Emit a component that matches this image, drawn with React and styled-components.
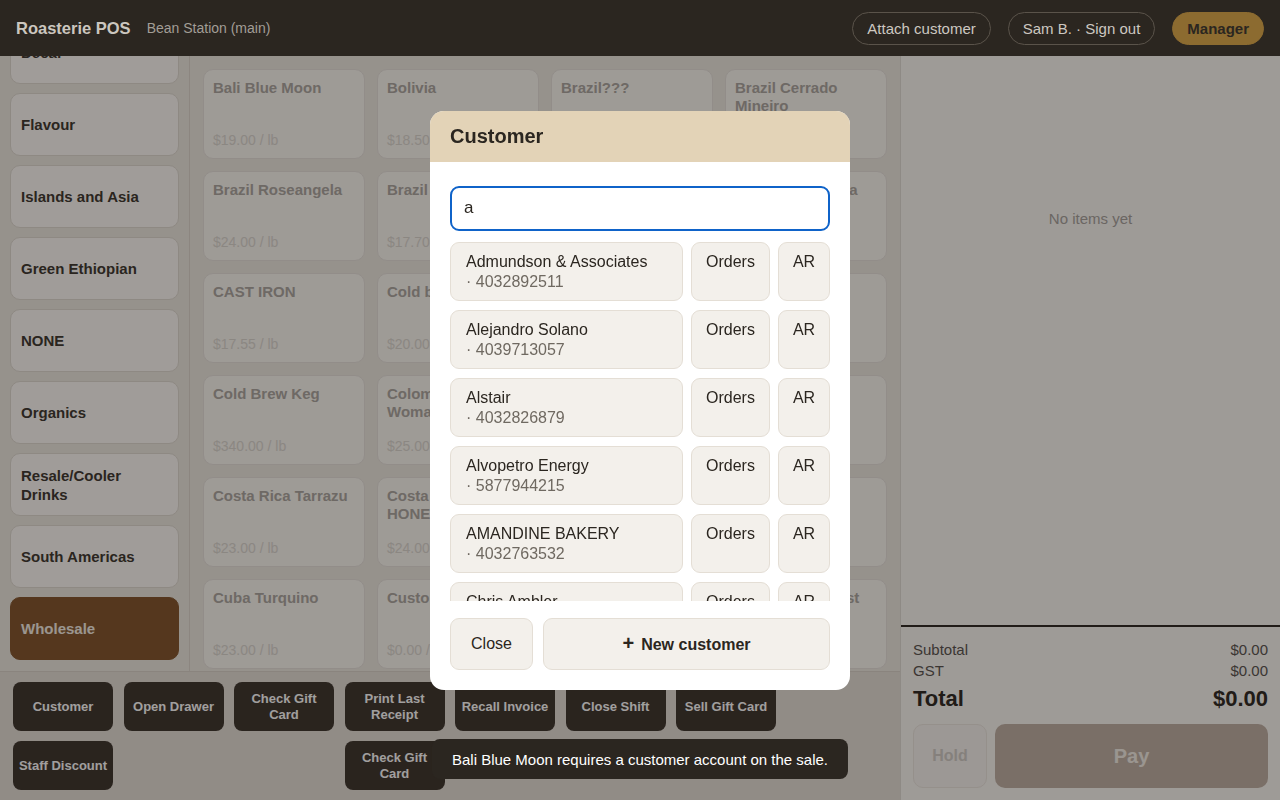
import React, { useLayoutEffect, useRef } from 'react'
import styled, { createGlobalStyle } from 'styled-components'

const GlobalStyle = createGlobalStyle`
  * { box-sizing: border-box; }
  html, body { margin: 0; padding: 0; height: 100%; }
  body {
    font-family: "Liberation Sans", Arial, sans-serif;
    color: #2b2620;
    background: #ede9e1;
    overflow: hidden;
  }
  button { font-family: inherit; cursor: pointer; }
`;

const Shell = styled.div`
  display: grid;
  grid-template-rows: 56px 1fr;
  width: 1280px;
  height: 800px;
`;

const TopBar = styled.header`
  position: relative;
  z-index: 60;
  display: flex;
  align-items: center;
  padding: 0 16px;
  background: #2b2620;
`;

const Brand = styled.div`
  font-size: 16.5px;
  font-weight: bold;
  color: #cbc6bf;
`;

const Store = styled.div`
  margin-left: 16px;
  font-size: 14px;
  color: #a29d96;
`;

const TopActions = styled.div`
  margin-left: auto;
  display: flex;
  gap: 17px;
`;

const Pill = styled.button`
  height: 33px;
  padding: 0 14px;
  border-radius: 999px;
  font-size: 15px;
  border: 1px solid ${p => (p.$gold ? '#8c6b30' : '#5a534a')};
  background: ${p => (p.$gold ? '#8c6b30' : 'transparent')};
  color: ${p => (p.$gold ? '#2b2620' : '#cdc8c1')};
  font-weight: ${p => (p.$gold ? 'bold' : 'normal')};
`;

const Body = styled.div`
  display: grid;
  grid-template-columns: 900px 1fr;
  min-height: 0;
`;

const LeftColumn = styled.div`
  display: grid;
  grid-template-rows: 1fr 129px;
  min-height: 0;
`;

const Catalog = styled.div`
  display: grid;
  grid-template-columns: 190px 1fr;
  min-height: 0;
`;

const Sidebar = styled.nav`
  display: flex;
  flex-direction: column;
  gap: 9px;
  padding: 10px 10px 11px;
  border-right: 1px solid #dcd6cd;
  overflow-y: auto;
  scrollbar-width: none;
  &::-webkit-scrollbar { display: none; }
`;

const CategoryButton = styled.button`
  flex: 0 0 63px;
  display: flex;
  align-items: center;
  padding: 0 10px;
  text-align: left;
  font-size: 15px;
  line-height: 19px;
  font-weight: bold;
  border-radius: 10px;
  border: 1px solid ${p => (p.$active ? '#80532a' : '#dfdad2')};
  background: ${p => (p.$active ? '#80532a' : '#fdfbf7')};
  color: ${p => (p.$active ? '#f5efe6' : '#3a342d')};
`;

const ProductGrid = styled.div`
  display: grid;
  grid-template-columns: repeat(4, 162px);
  grid-auto-rows: 90px;
  gap: 12px;
  padding: 13px;
  overflow: hidden;
`;

const ProductCard = styled.button`
  display: flex;
  flex-direction: column;
  justify-content: space-between;
  padding: 9px 9px 10px;
  text-align: left;
  border-radius: 10px;
  border: 1px solid #e6e2dd;
  background: #faf8f2;
`;

const ProductName = styled.div`
  font-size: 15px;
  line-height: 18px;
  font-weight: bold;
  color: #aaa6a0;
`;

const ProductPrice = styled.div`
  font-size: 14px;
  line-height: 16px;
  color: #dad7d1;
`;

const ActionBar = styled.div`
  display: grid;
  grid-template-columns: repeat(8, 100px);
  grid-template-rows: 49px 49px;
  column-gap: 10.5px;
  row-gap: 10px;
  padding: 10px 13px;
  border-top: 1px solid #d9d3ca;
  background: #e4dfd8;
`;

const ActionButton = styled.button`
  grid-column: ${p => p.$col || 'auto'};
  padding: 0 3px;
  border: none;
  border-radius: 8px;
  background: #3a322b;
  color: #ffffff;
  font-size: 13px;
  line-height: 16px;
  font-weight: bold;
`;

const CartPanel = styled.aside`
  display: flex;
  flex-direction: column;
  border-left: 1px solid #dfdcd5;
  background: #faf8f4;
  min-height: 0;
`;

const CartItems = styled.div`
  flex: 1;
  padding-top: 154px;
  text-align: center;
  font-size: 15px;
  color: #a5a19c;
`;

const Totals = styled.div`
  border-top: 2px solid #2b2620;
  padding: 12px;
`;

const TotalRow = styled.div`
  display: flex;
  justify-content: space-between;
  margin-top: ${p => (p.$big ? '3px' : '0')};
  font-size: ${p => (p.$big ? '22px' : '15px')};
  line-height: ${p => (p.$big ? '30px' : '21px')};
  font-weight: ${p => (p.$big ? 'bold' : 'normal')};
  color: ${p => (p.$big ? '#2b2620' : '#55514d')};
`;

const PayRow = styled.div`
  display: grid;
  grid-template-columns: 74px 1fr;
  gap: 8px;
  margin-top: 10px;
  height: 64px;
`;

const HoldButton = styled.button`
  border-radius: 10px;
  border: 1px solid #ebe6df;
  background: #f7f4f0;
  color: #d0ccc7;
  font-size: 16px;
  font-weight: bold;
`;

const PayButton = styled.button`
  border: none;
  border-radius: 10px;
  background: #beafa3;
  color: #f4efe8;
  font-size: 20px;
  font-weight: bold;
`;

const Backdrop = styled.div`
  position: fixed;
  inset: 0;
  z-index: 50;
  background: rgba(20, 16, 12, 0.4);
`;

const ModalLayer = styled.div`
  position: fixed;
  inset: 0;
  z-index: 70;
  display: flex;
  align-items: center;
  justify-content: center;
`;

const Modal = styled.div`
  width: 420px;
  border-radius: 14px;
  overflow: hidden;
  background: #ffffff;
`;

const ModalHeader = styled.div`
  display: flex;
  align-items: center;
  height: 51px;
  padding: 0 20px;
  background: #e3d3b7;
  font-size: 20px;
  font-weight: bold;
  color: #2b2620;
`;

const ModalBody = styled.div`
  padding: 24px 20px 0;
`;

const SearchInput = styled.input`
  display: block;
  width: 100%;
  height: 45px;
  padding: 0 12px;
  border: 2px solid #0f63c9;
  border-radius: 9px;
  font-family: inherit;
  font-size: 17px;
  color: #2b2620;
  outline: none;
`;

const ResultList = styled.div`
  display: flex;
  flex-direction: column;
  gap: 9px;
  height: 359px;
  margin-top: 11px;
  overflow: hidden;
`;

const ResultRow = styled.div`
  flex: 0 0 59px;
  display: grid;
  grid-template-columns: 1fr 79px 52px;
  gap: 8px;
  height: 59px;
`;

const RowButton = styled.button`
  height: 59px;
  padding: 9px ${p => (p.$wide ? '15px' : '0')} 0;
  text-align: ${p => (p.$wide ? 'left' : 'center')};
  display: flex;
  flex-direction: column;
  justify-content: flex-start;
  align-items: ${p => (p.$wide ? 'flex-start' : 'center')};
  border-radius: 9px;
  border: 1px solid #e4ded5;
  background: #f3f0eb;
  color: #2b2620;
  font-size: 16px;
  line-height: 20px;
`;

const Phone = styled.span`
  color: #6f6961;
`;

const ModalFooter = styled.div`
  display: grid;
  grid-template-columns: 83px 1fr;
  gap: 10px;
  padding: 17px 20px 20px;
`;

const FooterButton = styled.button`
  height: 52px;
  border-radius: 9px;
  border: 1px solid #e4ded5;
  background: #f3f0eb;
  color: #2b2620;
  font-size: 16px;
  font-weight: ${p => (p.$strong ? 'bold' : 'normal')};
`;

const Plus = styled.span`
  margin-right: 7px;
  font-size: 20px;
  font-weight: bold;
`;

const Toast = styled.div`
  position: fixed;
  z-index: 80;
  left: 50%;
  bottom: 21px;
  transform: translateX(-50%);
  display: flex;
  align-items: center;
  height: 40px;
  padding: 0 20px;
  border-radius: 8px;
  background: #2b2620;
  color: #ffffff;
  font-size: 15px;
  white-space: nowrap;
`;

const categories = [
  'Blends', 'Decaf', 'Flavour', 'Islands and Asia', 'Green Ethiopian', 'NONE',
  'Organics', 'Resale/Cooler Drinks', 'South Americas', 'Wholesale',
]

const products = [
  ['Bali Blue Moon', '$19.00 / lb'],
  ['Bolivia', '$18.50 / lb'],
  ['Brazil???', '$16.00 / lb'],
  ['Brazil Cerrado Mineiro', '$17.25 / lb'],
  ['Brazil Roseangela', '$24.00 / lb'],
  ['Brazil Santos', '$17.70 / lb'],
  ['Brazil Sul de Minas', '$18.00 / lb'],
  ['Burundi Kayanza', '$21.00 / lb'],
  ['CAST IRON', '$17.55 / lb'],
  ['Cold brew blend', '$20.00 / lb'],
  ['Cold Brew Cans', '$3.50 / ea'],
  ['Cold Brew Bag', '$19.00 / lb'],
  ['Cold Brew Keg', '$340.00 / lb'],
  ['Colombia Womankind Coop', '$25.00 / lb'],
  ['Colombia Huila', '$22.00 / lb'],
  ['Colombia', '$20.00 / lb'],
  ['Costa Rica Tarrazu', '$23.00 / lb'],
  ['Costa Rica Tarrazu HONEY', '$24.00 / lb'],
  ['Costa Rica', '$21.00 / lb'],
  ['Cuba', '$22.00 / lb'],
  ['Cuba Turquino', '$23.00 / lb'],
  ['Custom Blend', '$0.00 / lb'],
  ['Dark Roast', '$18.00 / lb'],
  ['Decaf Dark Roast', '$19.00 / lb'],
]

const actions = [
  { label: 'Customer' },
  { label: 'Open Drawer' },
  { label: 'Check Gift Card' },
  { label: 'Print Last Receipt' },
  { label: 'Recall Invoice' },
  { label: 'Close Shift' },
  { label: 'Sell Gift Card' },
  { label: 'Staff Discount', col: '1' },
  { label: 'Check Gift Card', col: '4' },
]

const customers = [
  ['Admundson & Associates', '4032892511'],
  ['Alejandro Solano', '4039713057'],
  ['Alstair', '4032826879'],
  ['Alvopetro Energy', '5877944215'],
  ['AMANDINE BAKERY', '4032763532'],
  ['Chris Ambler', '4035551290'],
]

const App = () => {
  const sidebarRef = useRef(null)

  useLayoutEffect(() => {
    const el = sidebarRef.current
    if (el) el.scrollTop = el.scrollHeight
  }, [])

  return (
    <>
      <GlobalStyle />
      <Shell>
        <TopBar>
          <Brand>Roasterie POS</Brand>
          <Store>Bean Station (main)</Store>
          <TopActions>
            <Pill type="button">Attach customer</Pill>
            <Pill type="button">Sam B. · Sign out</Pill>
            <Pill type="button" $gold>Manager</Pill>
          </TopActions>
        </TopBar>
        <Body>
          <LeftColumn>
            <Catalog>
              <Sidebar ref={sidebarRef}>
                {categories.map(name => (
                  <CategoryButton key={name} type="button" $active={name === 'Wholesale'}>
                    {name}
                  </CategoryButton>
                ))}
              </Sidebar>
              <ProductGrid>
                {products.map(([name, price]) => (
                  <ProductCard key={name} type="button">
                    <ProductName>{name}</ProductName>
                    <ProductPrice>{price}</ProductPrice>
                  </ProductCard>
                ))}
              </ProductGrid>
            </Catalog>
            <ActionBar>
              {actions.map((a, i) => (
                <ActionButton key={i} type="button" $col={a.col}>{a.label}</ActionButton>
              ))}
            </ActionBar>
          </LeftColumn>
          <CartPanel>
            <CartItems>No items yet</CartItems>
            <Totals>
              <TotalRow><span>Subtotal</span><span>$0.00</span></TotalRow>
              <TotalRow><span>GST</span><span>$0.00</span></TotalRow>
              <TotalRow $big><span>Total</span><span>$0.00</span></TotalRow>
              <PayRow>
                <HoldButton type="button">Hold</HoldButton>
                <PayButton type="button">Pay</PayButton>
              </PayRow>
            </Totals>
          </CartPanel>
        </Body>
      </Shell>
      <Backdrop />
      <ModalLayer>
        <Modal>
          <ModalHeader>Customer</ModalHeader>
          <ModalBody>
            <SearchInput defaultValue="a" />
            <ResultList>
              {customers.map(([name, phone]) => (
                <ResultRow key={name}>
                  <RowButton type="button" $wide>
                    <span>{name}</span>
                    <Phone>· {phone}</Phone>
                  </RowButton>
                  <RowButton type="button">Orders</RowButton>
                  <RowButton type="button">AR</RowButton>
                </ResultRow>
              ))}
            </ResultList>
          </ModalBody>
          <ModalFooter>
            <FooterButton type="button">Close</FooterButton>
            <FooterButton type="button" $strong><Plus>+</Plus>New customer</FooterButton>
          </ModalFooter>
        </Modal>
      </ModalLayer>
      <Toast>Bali Blue Moon requires a customer account on the sale.</Toast>
    </>
  )
}

export default App
